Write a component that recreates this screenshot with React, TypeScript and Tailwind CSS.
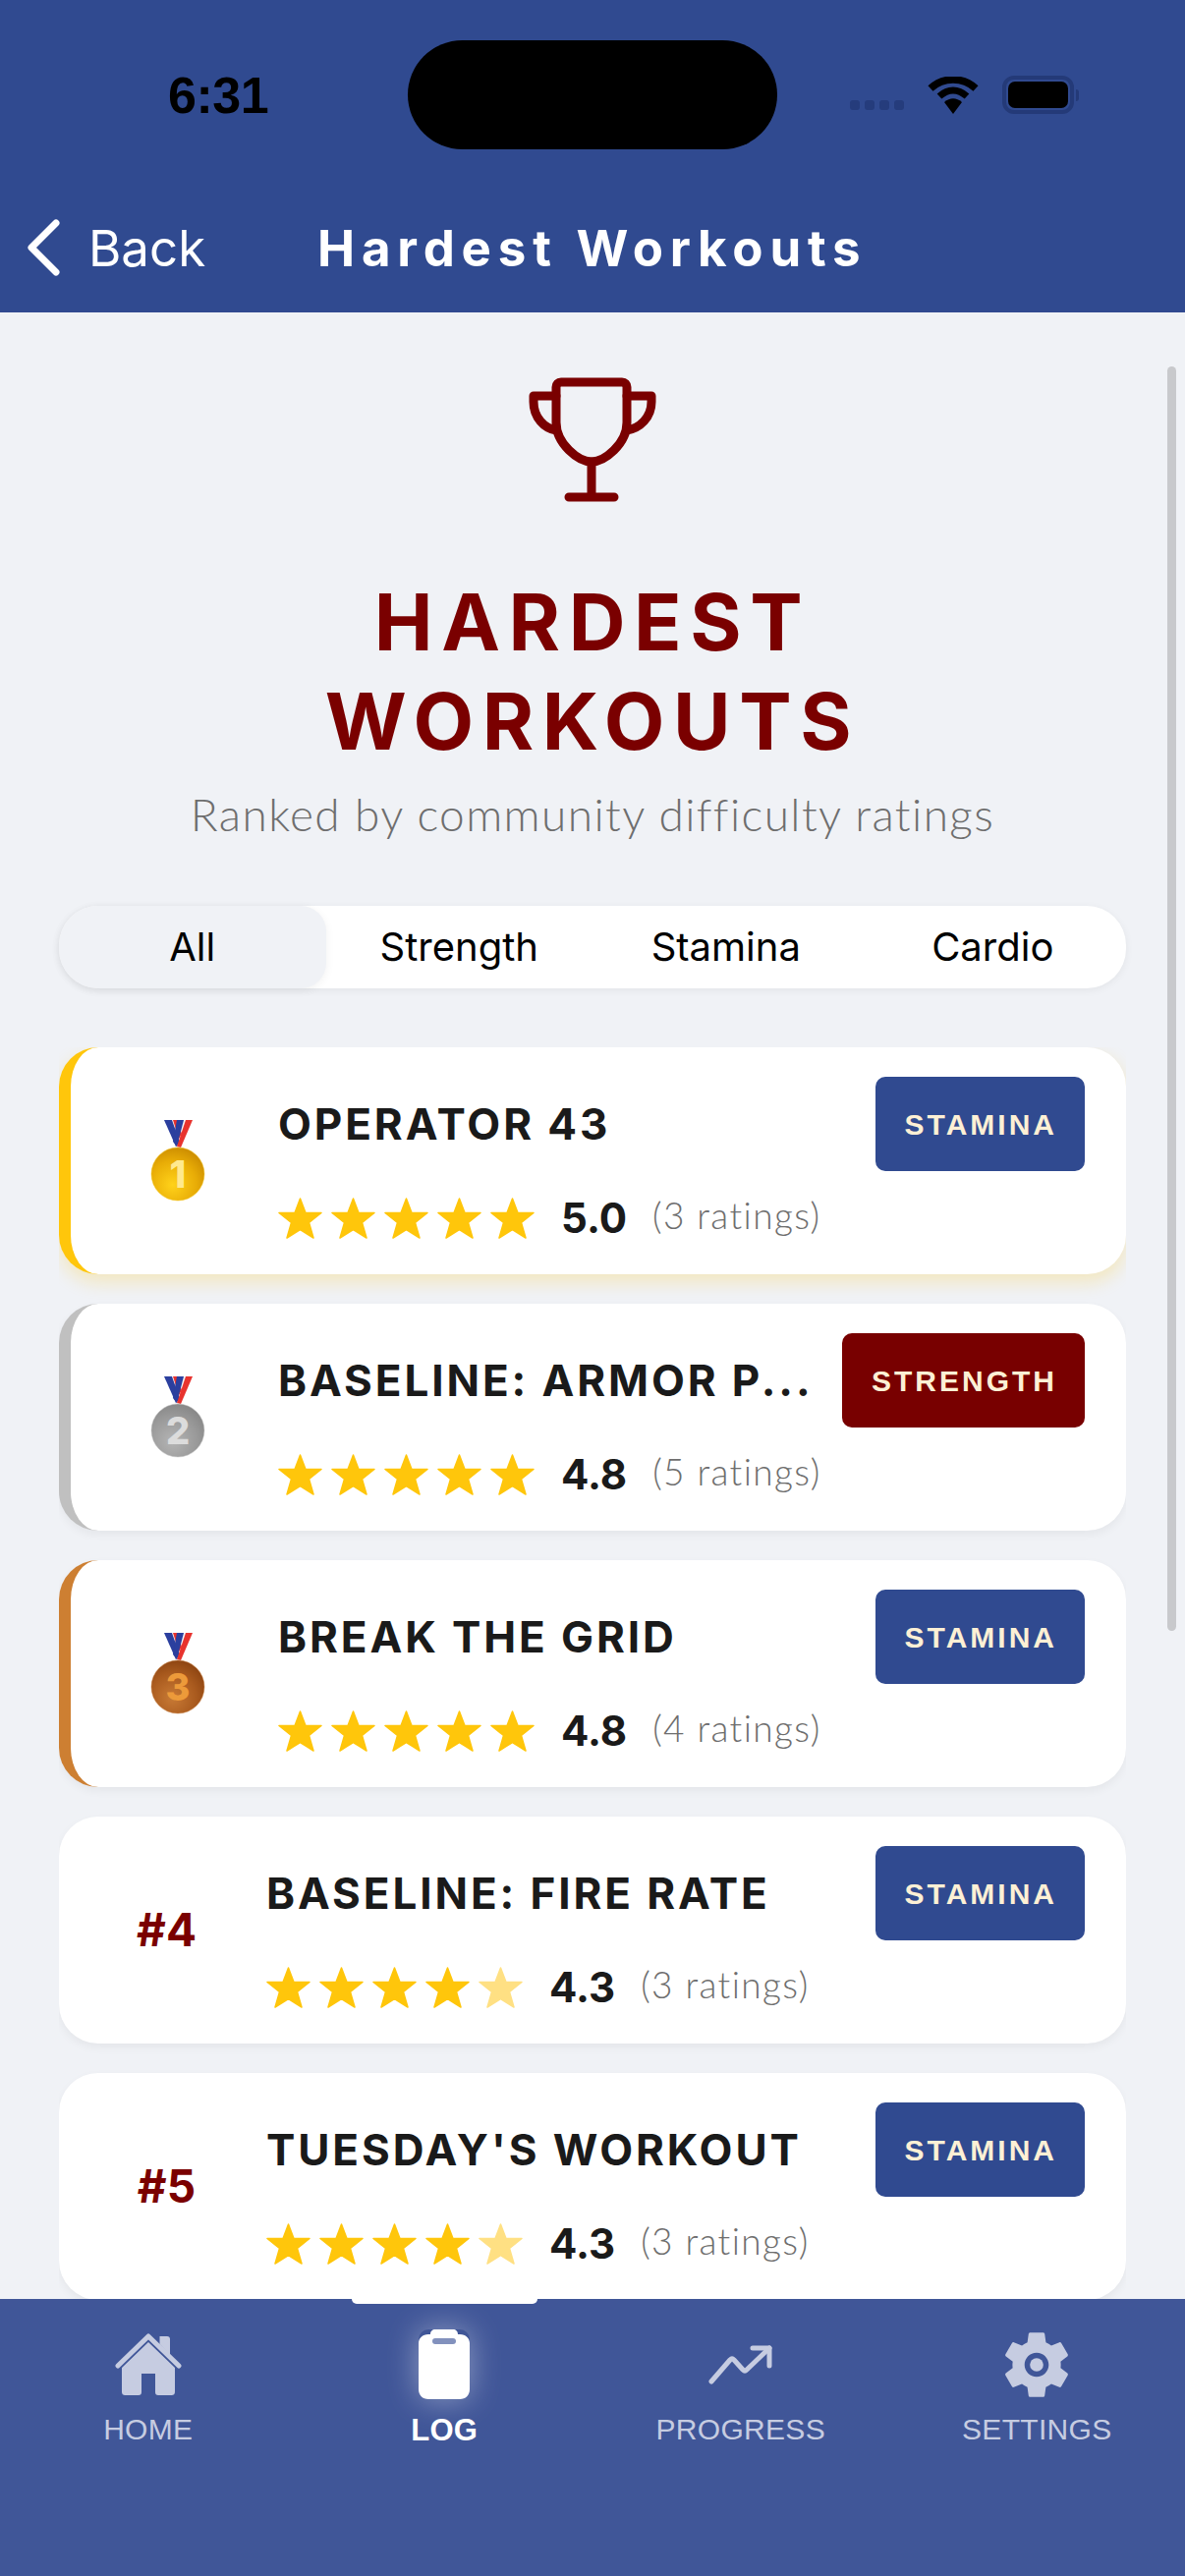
import React from 'react';

const workouts = [
  { rank: 1, name: 'OPERATOR 43', type: 'STAMINA', score: '5.0', ratings: '(3 ratings)', stars: 5 },
  { rank: 2, name: 'BASELINE: ARMOR P...', type: 'STRENGTH', score: '4.8', ratings: '(5 ratings)', stars: 5 },
  { rank: 3, name: 'BREAK THE GRID', type: 'STAMINA', score: '4.8', ratings: '(4 ratings)', stars: 5 },
  { rank: 4, name: 'BASELINE: FIRE RATE', type: 'STAMINA', score: '4.3', ratings: '(3 ratings)', stars: 4 },
  { rank: 5, name: "TUESDAY'S WORKOUT", type: 'STAMINA', score: '4.3', ratings: '(3 ratings)', stars: 4 },
];

const medals: Record<number, { light: string; mid: string; dark: string; num: string; rim: string }> = {
  1: { light: '#ffd21a', mid: '#e8ac06', dark: '#c98a00', num: '#ffe98f', rim: '#f3c21a' },
  2: { light: '#b4b4b4', mid: '#9a9a9a', dark: '#858585', num: '#dcdcdc', rim: '#c4c4c4' },
  3: { light: '#c87a35', mid: '#a95a1e', dark: '#8a4210', num: '#ec9a3a', rim: '#c47a3a' },
};

const Star = ({ faded }: { faded?: boolean }) => (
  <svg width="45" height="42" viewBox="0 0 45 42" className="shrink-0">
    <polygon
      points="22.5,1 28,15.5 44,15.5 31.5,25.5 36,41 22.5,32.5 9,41 13.5,25.5 1,15.5 17,15.5"
      fill={faded ? '#ffe083' : '#ffc60b'}
      stroke={faded ? '#ffe083' : '#ffc60b'}
      strokeWidth="1.5"
      strokeLinejoin="round"
    />
  </svg>
);

const Medal = ({ rank }: { rank: number }) => {
  const c = medals[rank];
  return (
    <svg width="60" height="86" viewBox="0 0 60 86">
      <defs>
        <radialGradient id={`medal-${rank}`} cx="40%" cy="70%" r="75%">
          <stop offset="0%" stopColor={c.light} />
          <stop offset="60%" stopColor={c.mid} />
          <stop offset="100%" stopColor={c.dark} />
        </radialGradient>
      </defs>
      <polygon points="25,1 45,1 33,29 27,29" fill="#f4f4f6" />
      <polygon points="25,1 29,1 34,15 31,20" fill="#e8332e" />
      <polygon points="16,1 24,1 32,24 28,28" fill="#2b3f9e" />
      <polygon points="29,1 36,1 29,28 25,23" fill="#2b3f9e" />
      <polygon points="38,1 45,1 33,29 29,28" fill="#e8332e" />
      <circle cx="30" cy="56" r="27" fill={`url(#medal-${rank})`} stroke={c.rim} strokeWidth="0.5" />
      <text x="30" y="70" textAnchor="middle" fontFamily="Inter, sans-serif" fontWeight="800" fontSize="38" fill={c.num}>
        {rank}
      </text>
    </svg>
  );
};

const Wifi = () => (
  <svg width="52" height="38" viewBox="0 0 52 38" fill="none">
    <path d="M26 38 L17 26 C23 21 29 21 35 26 Z" fill="#000" />
    <path d="M12 20 C21 12 31 12 40 20" stroke="#000" strokeWidth="7" />
    <path d="M3 12 C16 0 36 0 49 12" stroke="#000" strokeWidth="7.5" />
  </svg>
);

const Trophy = () => (
  <svg width="136" height="132" viewBox="0 0 136 132" fill="none" stroke="#7a0000" strokeWidth="9" strokeLinecap="round" strokeLinejoin="round">
    <path d="M31 50 V14 C31 11 33 9 36 9 H98 C101 9 103 11 103 14 V50 C103 72 80 90 67 90 C54 90 31 72 31 50 Z" />
    <path d="M31 23 H8 V29 C8 45 19 56 31 58" />
    <path d="M103 23 H128 V29 C128 45 116 56 103 58" />
    <path d="M67 90 V126 M44 126 H90" />
  </svg>
);

const BackChevron = () => (
  <svg width="34" height="58" viewBox="0 0 34 58" fill="none" stroke="#fff" strokeWidth="7" strokeLinecap="round" strokeLinejoin="round">
    <path d="M30 4 L5 29 L30 54" />
  </svg>
);

const HomeIcon = () => (
  <svg width="68" height="64" viewBox="0 0 68 64" fill="#c6cce1">
    <path d="M45.5 3 H53 C55 3 56 4 56 6 V22 L45.5 11 Z" />
    <path d="M34 9 L61 35 V59 C61 62 60 63 57 63 H44 C42 63 41 62 41 60 V41 H27 V60 C27 62 26 63 24 63 H11 C8 63 7 62 7 59 V35 Z" />
    <path d="M3 33 L34 3 L65 33" fill="none" stroke="#c6cce1" strokeWidth="5" strokeLinecap="round" strokeLinejoin="round" />
  </svg>
);

const ClipboardIcon = () => (
  <div className="relative w-[52px] h-[71px] shadow-[0_0_32px_rgba(255,255,255,0.42)] rounded-[10px]">
    <svg width="52" height="71" viewBox="0 0 52 71">
      <path d="M12 5 C12 2 14 0 17 0 H35 C38 0 40 2 40 5 H42 C48 5 52 9 52 14 V61 C52 67 48 71 42 71 H10 C4 71 0 67 0 61 V14 C0 9 4 5 10 5 Z" fill="#fff" />
      <rect x="14" y="9" width="24" height="6" rx="3" fill="#8291bd" />
    </svg>
  </div>
);

const ProgressIcon = () => (
  <svg width="66" height="40" viewBox="0 0 66 40" fill="none" stroke="#c6cce1" strokeWidth="5" strokeLinecap="round" strokeLinejoin="round">
    <path d="M3 37 L22 15 Q24 13 26 15 L35 25 Q37 27 39 25 L62 3" />
    <path d="M45 3 H62 V21" />
  </svg>
);

const GearIcon = () => (
  <svg width="82" height="82" viewBox="0 0 24 24" fill="#c6cce1">
    <path d="M19.14,12.94c0.04-0.3,0.06-0.61,0.06-0.94c0-0.32-0.02-0.64-0.07-0.94l2.03-1.58c0.18-0.14,0.23-0.41,0.12-0.61l-1.92-3.32c-0.12-0.22-0.37-0.29-0.59-0.22l-2.39,0.96c-0.5-0.38-1.03-0.7-1.62-0.94L14.4,2.81c-0.04-0.24-0.24-0.41-0.48-0.41h-3.84c-0.24,0-0.43,0.17-0.47,0.41L9.25,5.35C8.66,5.59,8.12,5.92,7.63,6.29L5.24,5.33c-0.22-0.08-0.47,0-0.59,0.22L2.74,8.87C2.62,9.08,2.66,9.34,2.86,9.48l2.03,1.58C4.84,11.36,4.8,11.69,4.8,12s0.02,0.64,0.07,0.94l-2.03,1.58c-0.18,0.14-0.23,0.41-0.12,0.61l1.92,3.32c0.12,0.22,0.37,0.29,0.59,0.22l2.39-0.96c0.5,0.38,1.03,0.7,1.62,0.94l0.36,2.54c0.05,0.24,0.24,0.41,0.48,0.41h3.84c0.24,0,0.44-0.17,0.47-0.41l0.36-2.54c0.59-0.24,1.13-0.56,1.62-0.94l2.39,0.96c0.22,0.08,0.47,0,0.59-0.22l1.92-3.32c0.12-0.22,0.07-0.47-0.12-0.61L19.14,12.94z M12,15.6c-1.98,0-3.6-1.62-3.6-3.6s1.62-3.6,3.6-3.6s3.6,1.62,3.6,3.6S13.98,15.6,12,15.6z" fillRule="evenodd" />
    <circle cx="12" cy="12" r="2" />
  </svg>
);

const StatusBar = () => (
  <div className="flex items-center h-[111px] mt-[41px]">
    <span className="ml-[171px] w-[102px] text-[52px] font-bold leading-none text-black font-['Liberation_Sans',sans-serif] tracking-[-0.5px]">6:31</span>
    <div className="ml-[142px] w-[376px] h-[111px] rounded-[56px] bg-black" />
    <div className="ml-[74px] flex gap-[5px] mt-[21px]">
      {[0, 1, 2, 3].map((i) => (
        <div key={i} className="w-[10px] h-[10px] rounded-[3px] bg-[#253c7c]" />
      ))}
    </div>
    <div className="ml-[24px]">
      <Wifi />
    </div>
    <div className="ml-[24px] flex items-center">
      <div className="w-[73px] h-[39px] rounded-[12px] border-[4px] border-[#243a78] p-[2px]">
        <div className="w-full h-full rounded-[7px] bg-black" />
      </div>
      <div className="w-[3px] h-[12px] ml-[2px] rounded-r-[3px] bg-[#243a78]" />
    </div>
  </div>
);

const Card = ({ w }: { w: (typeof workouts)[number] }) => {
  const edge =
    w.rank === 1
      ? 'border-l-[12px] border-[#ffc60b] shadow-[0_8px_18px_rgba(255,198,11,0.24)]'
      : w.rank === 2
        ? 'border-l-[12px] border-[#c0c0c0] shadow-[0_4px_10px_rgba(0,0,0,0.05)]'
        : w.rank === 3
          ? 'border-l-[12px] border-[#cd7f32] shadow-[0_4px_10px_rgba(0,0,0,0.05)]'
          : 'shadow-[0_4px_10px_rgba(0,0,0,0.05)]';

  return (
    <div className={`flex h-[231px] shrink-0 rounded-[40px] bg-white pr-[42px] ${edge}`}>
      <div className="w-[211px] shrink-0 flex items-center justify-center pl-[8px]">
        {w.rank <= 3 ? (
          <div className="mr-[2px]">
            <Medal rank={w.rank} />
          </div>
        ) : (
          <span className="text-[46px] font-bold text-[#7a0000]">#{w.rank}</span>
        )}
      </div>
      <div className="flex-1 min-w-0 flex flex-col pt-[30px]">
        <div className="flex items-center justify-between h-[96px]">
          <span className="whitespace-nowrap text-[44px] font-bold tracking-[2.9px] text-[#1a1a1a] leading-none">{w.name}</span>
          <div className={`shrink-0 h-[96px] pl-[30px] pr-[28px] flex items-center rounded-[10px] font-['Liberation_Sans',sans-serif] text-[30px] font-bold tracking-[3px] text-[#fdf0d5] ${w.type === 'STRENGTH' ? 'bg-[#780000]' : 'bg-[#304a90]'}`}>
            {w.type}
          </div>
        </div>
        <div className="flex items-center mt-[27px] h-[42px]">
          <div className="flex gap-[9px]">
            {[1, 2, 3, 4, 5].map((n) => (
              <Star key={n} faded={n > w.stars} />
            ))}
          </div>
          <span className="ml-[27px] text-[42px] font-bold leading-none text-[#1a1a1a]">{w.score}</span>
          <span className="ml-[26px] text-[37px] font-light leading-none text-[#6e6e6e] font-['Lato',sans-serif] tracking-[1.4px] mt-[-8px]">{w.ratings}</span>
        </div>
      </div>
    </div>
  );
};

const NavItem = ({ icon, label, active }: { icon: React.ReactNode; label: string; active?: boolean }) => (
  <div className="relative flex-1 flex flex-col items-center">
    <div className="h-[97px] flex items-center justify-center mt-[18px]">{icon}</div>
    <span className={`mt-[3px] leading-none font-['Liberation_Sans',sans-serif] tracking-[0.3px] ${active ? 'text-[31px] font-bold text-white' : 'text-[30px] text-[#c6cce1]'}`}>{label}</span>
  </div>
);

export default function App() {
  return (
    <div className="relative w-[1206px] h-[2622px] flex flex-col overflow-hidden bg-[#f0f2f6] font-['Inter',sans-serif]">
      <header className="h-[318px] shrink-0 bg-[#304a90] flex flex-col">
        <StatusBar />
        <div className="flex items-center mt-[60px] h-[80px] text-white">
          <div className="ml-[27px] w-[34px] shrink-0">
            <BackChevron />
          </div>
          <span className="ml-[29px] w-[120px] text-[51px] font-normal leading-none">Back</span>
          <span className="ml-[113px] text-[51px] font-bold leading-none tracking-[6.8px] whitespace-nowrap">Hardest Workouts</span>
        </div>
      </header>

      <main className="flex-1 min-h-0 overflow-hidden flex flex-col items-center">
        <div className="mt-[62px]">
          <Trophy />
        </div>
        <h1 className="mt-[70px] text-[80px] leading-[101px] font-bold tracking-[8.6px] text-[#7a0000] text-center">
          HARDEST
          <br />
          WORKOUTS
        </h1>
        <p className="mt-[22px] text-[46px] leading-none font-light text-[#6e6e6e] font-['Lato',sans-serif] tracking-[1.4px]">Ranked by community difficulty ratings</p>

        <div className="mt-[70px] w-[1086px] h-[84px] shrink-0 flex items-center rounded-[40px] bg-white shadow-[0_2px_8px_rgba(0,0,0,0.06)]">
          {['All', 'Strength', 'Stamina', 'Cardio'].map((t, i) => (
            <div
              key={t}
              className={`h-full w-[271.5px] flex items-center justify-center text-[40px] text-black ${i === 0 ? 'bg-[#f0f2f6] rounded-l-[40px] rounded-r-[26px] shadow-[0_2px_10px_rgba(0,0,0,0.06)]' : ''}`}
            >
              {t}
            </div>
          ))}
        </div>

        <div className="mt-[60px] w-[1086px] flex-1 min-h-0 flex flex-col gap-[30px] overflow-hidden">
          {workouts.map((w) => (
            <Card key={w.rank} w={w} />
          ))}
        </div>
      </main>

      <nav className="relative h-[282px] shrink-0 bg-[#405698] flex">
        <NavItem icon={<HomeIcon />} label="HOME" />
        <NavItem icon={<ClipboardIcon />} label="LOG" active />
        <NavItem icon={<ProgressIcon />} label="PROGRESS" />
        <NavItem icon={<GearIcon />} label="SETTINGS" />
        <div className="absolute top-0 left-[358px] w-[189px] h-[5px] rounded-b-[6px] bg-white" />
      </nav>

      <div className="absolute top-[373px] left-[1188px] w-[9px] h-[1287px] rounded-full bg-[#c8c9cc]" />
    </div>
  );
}
